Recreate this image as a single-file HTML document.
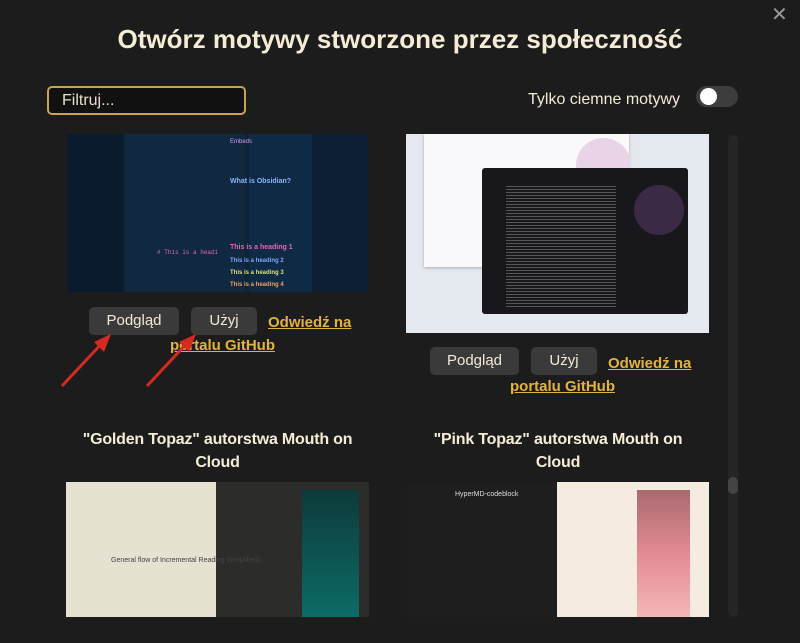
<!DOCTYPE html>
<html><head><meta charset="utf-8"><style>
*{margin:0;padding:0;box-sizing:border-box}
body{width:800px;height:643px;background:#1c1c1c;font-family:"Liberation Sans",sans-serif;color:#f3ead6;position:relative;overflow:hidden}
.a{position:absolute}
h1{position:absolute;left:0;width:800px;top:24px;text-align:center;font-size:26px;font-weight:bold;color:#f5ecd6}
.inp{left:47px;top:86px;width:199px;height:29px;border:2px solid #c9a34e;border-radius:5px;background:#111;font-size:16px;color:#e8e0cc;padding:4px 13px}
.btn{background:#3a3a3a;border-radius:5px;height:28px;font-size:15px;color:#f3ead6;text-align:center;line-height:28px}
.lnk{color:#e3b341;text-decoration:underline;font-size:15px;font-weight:bold}
.h{font-size:16px;font-weight:bold;text-align:center;line-height:23px;color:#f5ecd6;letter-spacing:-0.2px}
</style></head><body>
<h1>Otwórz motywy stworzone przez społeczność</h1>
<div class="a" style="left:771px;top:2px;font-size:20px;color:#999">✕</div>
<div class="a inp">Filtruj...</div>
<div class="a" style="left:528px;top:91px;font-size:16px;color:#f3ead6">Tylko ciemne motywy</div>
<div class="a" style="left:696px;top:86px;width:42px;height:21px;border-radius:11px;background:#3d3d3d"></div>
<div class="a" style="left:700px;top:88px;width:17px;height:17px;border-radius:50%;background:#fff"></div>
<div class="a" style="left:728px;top:135px;width:10px;height:482px;border-radius:5px;background:#252525"></div>
<div class="a" style="left:728px;top:477px;width:10px;height:17px;border-radius:5px;background:#444"></div>

<div class="a" style="left:67px;top:134px;width:301px;height:158px;background:#0e2238;overflow:hidden">
 <div class="a" style="left:0;top:0;width:56px;height:158px;background:#0b1b2e"></div>
 <div class="a" style="left:58px;top:0;width:120px;height:158px;background:#102840"></div>
 <div class="a" style="left:182px;top:0;width:100px;height:158px;background:#0f2a45"></div>
 <div class="a" style="left:245px;top:0;width:56px;height:158px;background:#0c1e33"></div>
 <div class="a" style="left:163px;top:5px;font-size:6px;color:#d9e">Embeds</div>
 <div class="a" style="left:90px;top:115px;font-size:6px;color:#e567b5;font-family:'Liberation Mono'"># This is a headi</div>
 <div class="a" style="left:163px;top:110px;font-size:7px;color:#e567b5;font-weight:bold">This is a heading 1</div>
 <div class="a" style="left:163px;top:124px;font-size:6px;color:#7aa8ff;font-weight:bold">This is a heading 2</div>
 <div class="a" style="left:163px;top:136px;font-size:6px;color:#d8e07a;font-weight:bold">This is a heading 3</div>
 <div class="a" style="left:163px;top:148px;font-size:6px;color:#f0a060;font-weight:bold">This is a heading 4</div>
 <div class="a" style="left:163px;top:44px;font-size:7px;color:#8ab4ff;font-weight:bold">What is Obsidian?</div>
</div>
<div class="a btn" style="left:89px;top:307px;width:90px">Podgląd</div>
<div class="a btn" style="left:191px;top:307px;width:66px">Użyj</div>
<div class="a lnk" style="left:268px;top:314px">Odwiedź na</div>
<div class="a lnk" style="left:170px;top:337px">portalu GitHub</div>
<svg class="a" style="left:0;top:0" width="800" height="643"><g stroke="#d42a20" stroke-width="3" fill="#d42a20"><line x1="62" y1="386" x2="104" y2="341"/><polygon points="111,334 94,342 104,352" stroke="none"/><line x1="147" y1="386" x2="189" y2="341"/><polygon points="196,334 179,342 189,352" stroke="none"/></g></svg>

<div class="a" style="left:406px;top:134px;width:303px;height:199px;background:#e4e8ef;overflow:hidden">
 <div class="a" style="left:18px;top:0;width:205px;height:133px;background:#f9f9fb;box-shadow:0 1px 3px #aaa"></div>
 <div class="a" style="left:170px;top:4px;width:55px;height:55px;border-radius:50%;background:#e9d3e6"></div>
 <div class="a" style="left:76px;top:34px;width:206px;height:146px;background:#18181c;border-radius:3px"></div>
 <div class="a" style="left:228px;top:51px;width:50px;height:50px;border-radius:50%;background:#3a2a45"></div>
 <div class="a" style="left:100px;top:50px;width:110px;height:125px;background:repeating-linear-gradient(#18181c 0 2px,#55555a 2px 3px)"></div>
</div>
<div class="a btn" style="left:430px;top:347px;width:89px">Podgląd</div>
<div class="a btn" style="left:531px;top:347px;width:66px">Użyj</div>
<div class="a lnk" style="left:608px;top:355px">Odwiedź na</div>
<div class="a lnk" style="left:510px;top:378px">portalu GitHub</div>

<div class="a h" style="left:66px;top:428px;width:303px">"Golden Topaz" autorstwa Mouth on<br>Cloud</div>
<div class="a h" style="left:407px;top:428px;width:302px">"Pink Topaz" autorstwa Mouth on<br>Cloud</div>

<div class="a" style="left:66px;top:482px;width:303px;height:135px;overflow:hidden;background:#e5e2d2">
 <div class="a" style="left:150px;top:0;width:153px;height:135px;background:#2c2c2a"></div>
 <div class="a" style="left:236px;top:8px;width:57px;height:127px;background:linear-gradient(#0d3a3a,#0d6b66)"></div>
 <div class="a" style="left:45px;top:75px;font-size:7px;color:#444">General flow of Incremental Reading (simplified)</div>
</div>
<div class="a" style="left:407px;top:482px;width:302px;height:135px;overflow:hidden;background:#f5ebe0">
 <div class="a" style="left:0;top:0;width:150px;height:135px;background:#1e1e1e"></div>
 <div class="a" style="left:230px;top:8px;width:53px;height:127px;background:linear-gradient(#a86a6f,#e38a94 50%,#f4b7b7)"></div>
 <div class="a" style="left:48px;top:9px;font-size:7px;color:#ddd">HyperMD-codeblock</div>
</div>
</body></html>
